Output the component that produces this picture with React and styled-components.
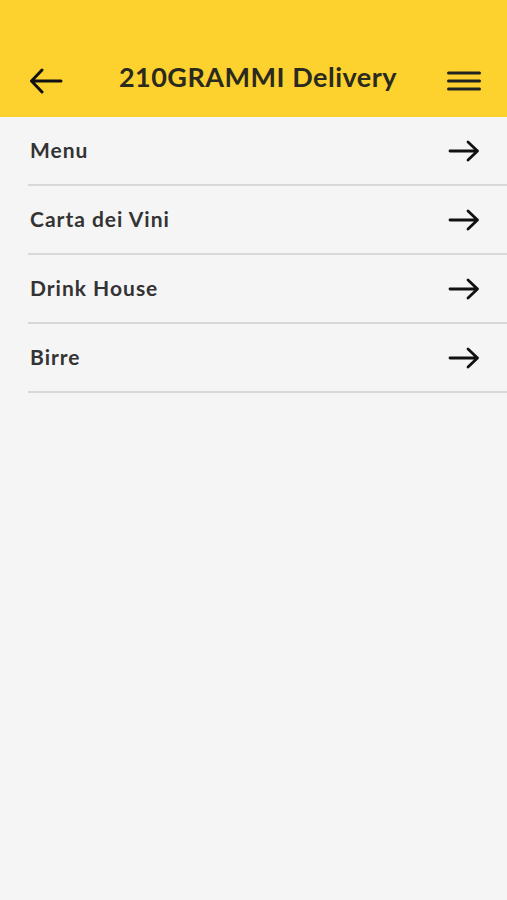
import React from 'react'
import styled, { createGlobalStyle } from 'styled-components'

const GlobalStyle = createGlobalStyle`
    html, body {
        margin: 0;
        padding: 0;
        background: #f5f5f5;
    }
    body {
        font-family: Lato, "Noto Sans", sans-serif;
    }
`

const items = ['Menu', 'Carta dei Vini', 'Drink House', 'Birre']

const BackIcon = () => (
    <svg width="34" height="26" viewBox="0 0 34 26" fill="none">
        <path d="M32 13H3M13 2L2.5 13L13 24" stroke="#111" strokeWidth="3" strokeLinecap="round" strokeLinejoin="round" />
    </svg>
)

const MenuIcon = () => (
    <svg width="34" height="20" viewBox="0 0 34 20" fill="none">
        <path d="M1.5 2H32.5M1.5 10H32.5M1.5 18H32.5" stroke="#222" strokeWidth="3" strokeLinecap="round" />
    </svg>
)

const ArrowIcon = () => (
    <svg width="32" height="22" viewBox="0 0 32 22" fill="none">
        <path d="M2 11H29.5M20 2L29.5 11L20 20" stroke="#111" strokeWidth="2.8" strokeLinecap="round" strokeLinejoin="round" />
    </svg>
)

const App = () => {
    return (
        <Page>
            <GlobalStyle />
            <Header>
                <IconButton><BackIcon /></IconButton>
                <Title>210GRAMMI Delivery</Title>
                <IconButton><MenuIcon /></IconButton>
            </Header>
            <List>
                {items.map((label) => (
                    <Row key={label}>
                        <Label>{label}</Label>
                        <ArrowIcon />
                    </Row>
                ))}
            </List>
        </Page>
    )
}

const Page = styled.div`
    min-height: 900px;
    background: #f5f5f5;
`

const Header = styled.header`
    height: 117px;
    box-sizing: border-box;
    padding: 40px 26px 0 29px;
    background: #fdd22f;
    display: flex;
    align-items: center;
    justify-content: space-between;
`

const IconButton = styled.div`
    display: flex;
    align-items: center;
    justify-content: center;
    margin-top: 4px;
`

const Title = styled.h1`
    margin: 0 0 4px 6px;
    font-size: 27px;
    font-weight: 700;
    letter-spacing: 0.5px;
    color: #2a2a1e;
`

const List = styled.div`
    padding-left: 28px;
`

const Row = styled.div`
    height: 67px;
    box-sizing: content-box;
    border-bottom: 2px solid #d8d8d8;
    display: flex;
    align-items: center;
    justify-content: space-between;
    padding: 0 27px 0 2px;
`

const Label = styled.span`
    font-size: 21px;
    font-weight: 700;
    letter-spacing: 1px;
    color: #333;
    margin-bottom: 2px;
`

export default App
